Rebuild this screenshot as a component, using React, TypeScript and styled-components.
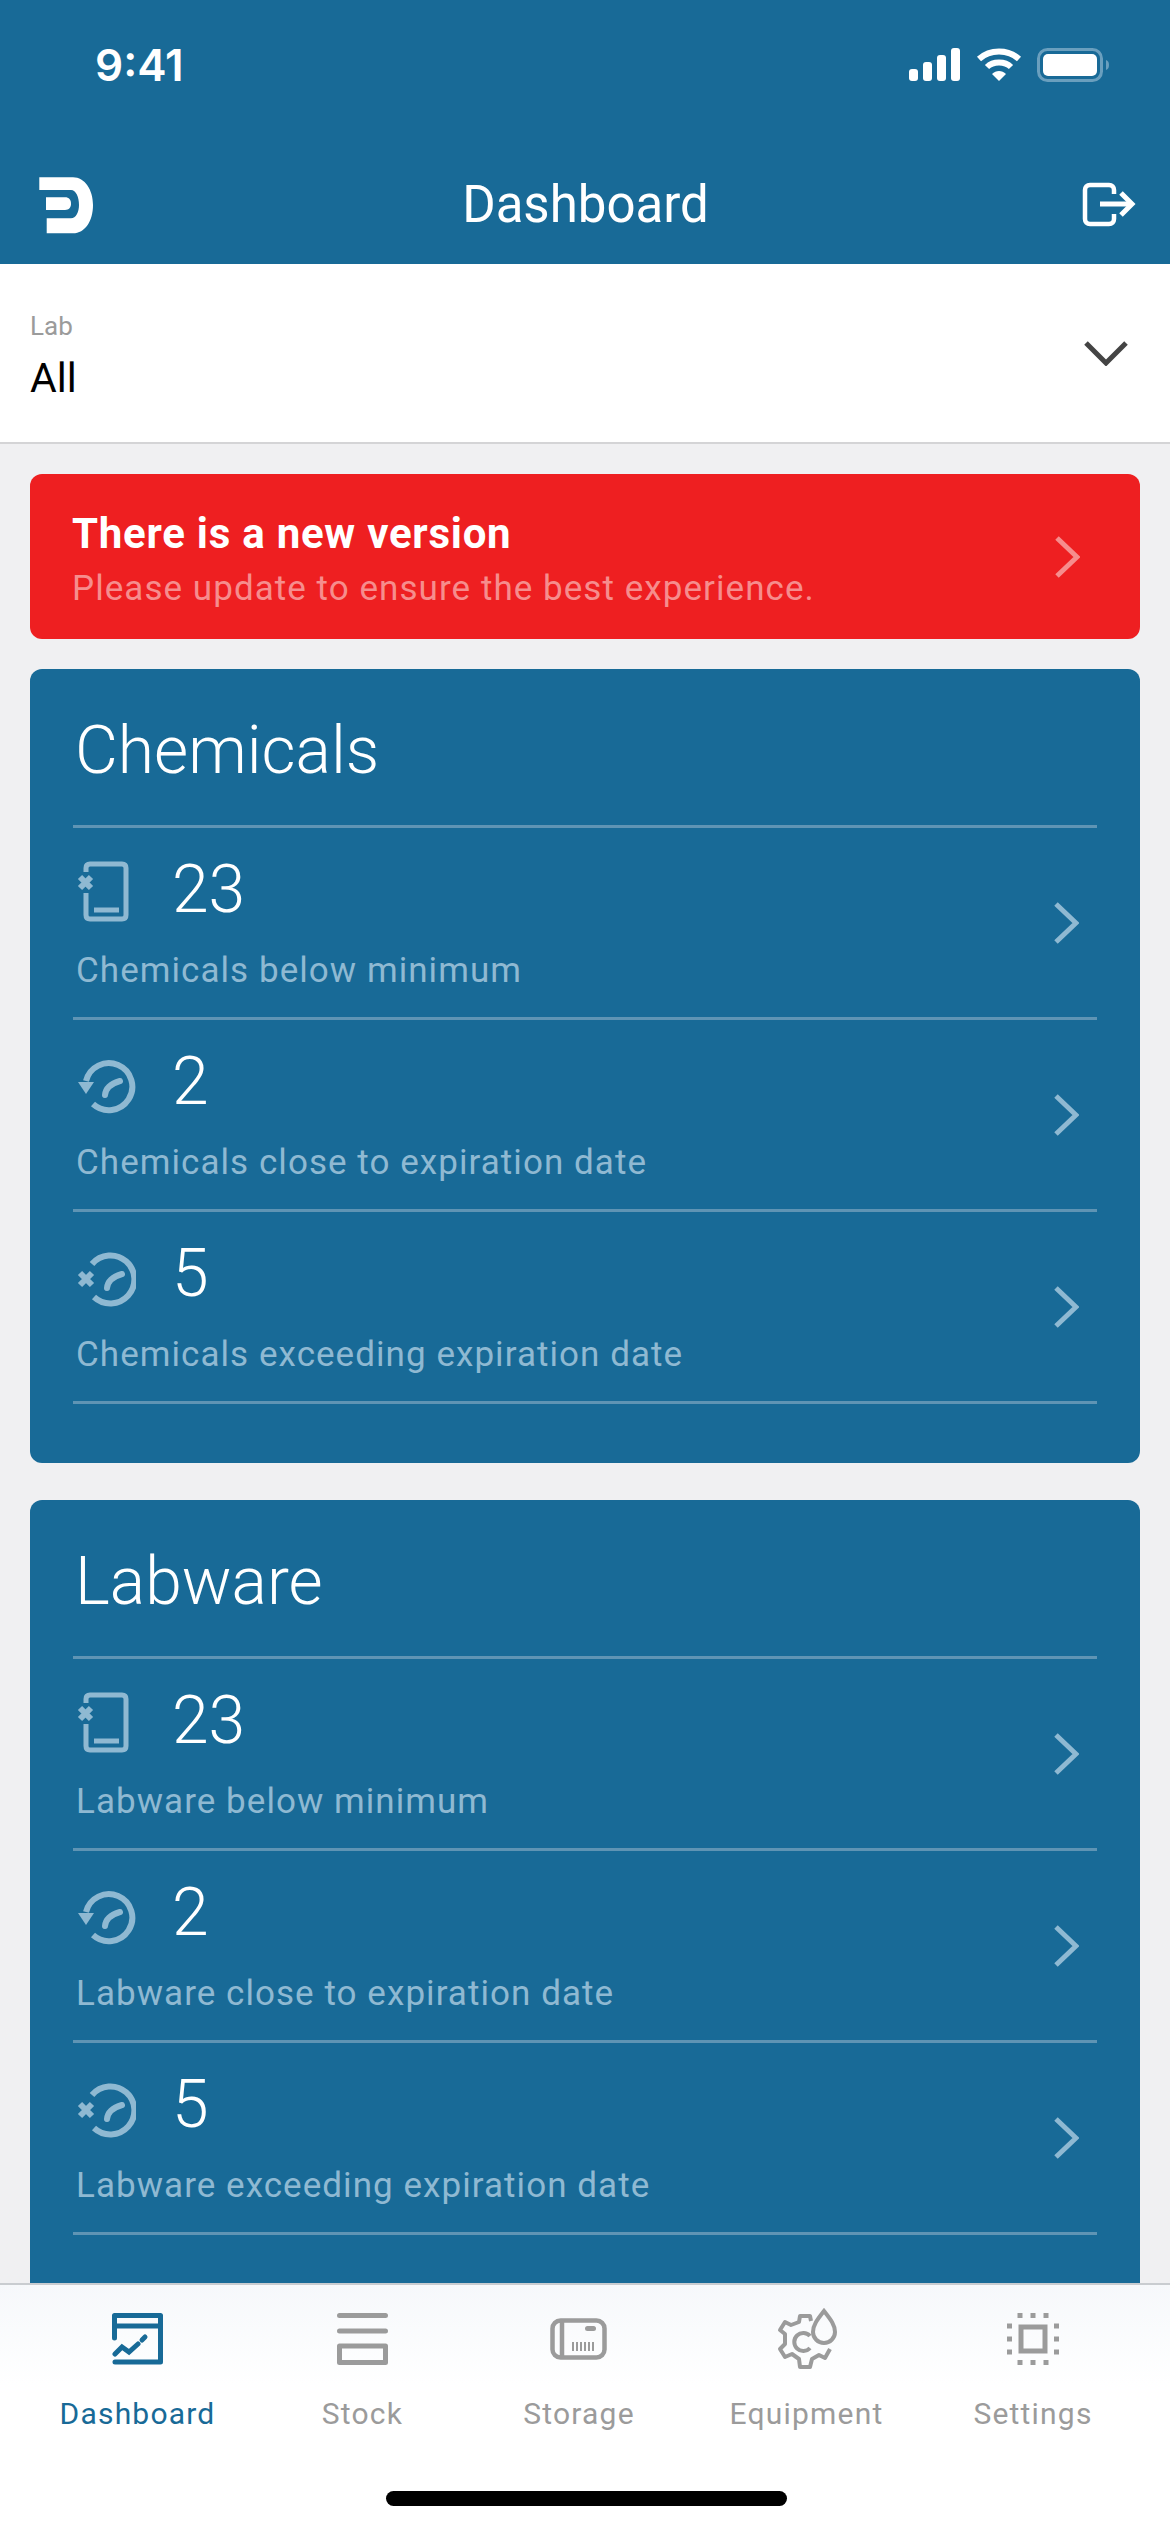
import styled, { createGlobalStyle } from 'styled-components'

const BLUE = '#186a97'
const PALE = '#8fb9d2'
const GREY = '#9b9b9b'

const GlobalStyle = createGlobalStyle`
  html, body {
    margin: 0;
    padding: 0;
    background: #f0f0f2;
  }

  body {
    font-family: Roboto, "Liberation Sans", sans-serif;
  }
`

const Screen = styled.div`
  display: flex;
  flex-direction: column;
  width: 1170px;
  height: 2532px;
  overflow: hidden;
`

const Header = styled.header`
  flex: none;
  background: ${BLUE};
  color: white;
`

const StatusBar = styled.div`
  display: flex;
  justify-content: space-between;
  align-items: center;
  height: 129px;
  padding: 0 59px 0 95px;
`

const Clock = styled.div`
  font-family: Inter, sans-serif;
  font-size: 44px;
  font-weight: 600;
  line-height: 1;
`

const StatusIcons = styled.div`
  display: flex;
  align-items: center;
  gap: 15px;
`

const NavBar = styled.div`
  display: flex;
  justify-content: space-between;
  align-items: center;
  box-sizing: border-box;
  height: 135px;
  padding: 16px 31px 0 36px;
`

const NavTitle = styled.div`
  margin-right: 4px;
  font-size: 51px;
  line-height: 1;
`

const NavIcon = styled.svg`
  display: block;
`

const LabPicker = styled.div`
  flex: none;
  display: flex;
  justify-content: space-between;
  align-items: center;
  box-sizing: border-box;
  height: 180px;
  padding: 0 42px 0 30px;
  background: white;
  border-bottom: 2px solid #d4d4d6;
`

const PickerText = styled.div`
  padding-top: 6px;
`

const PickerLabel = styled.div`
  color: ${GREY};
  font-size: 26px;
  line-height: 30px;
`

const PickerValue = styled.div`
  margin-top: 14px;
  color: black;
  font-size: 41px;
  line-height: 46px;
`

const Content = styled.main`
  flex: 1;
  min-height: 0;
  overflow: hidden;
  display: flex;
  flex-direction: column;
  padding: 30px 30px 0;
`

const Banner = styled.div`
  flex: none;
  display: flex;
  justify-content: space-between;
  align-items: center;
  box-sizing: border-box;
  height: 165px;
  padding: 0 60px 0 42px;
  border-radius: 12px;
  background: #ee1f21;
`

const BannerCopy = styled.div`
  padding-top: 9px;
`

const BannerTitle = styled.div`
  color: white;
  font-size: 42px;
  font-weight: 700;
  letter-spacing: 0.75px;
  line-height: 46px;
`

const BannerText = styled.div`
  margin-top: 10px;
  color: #f68d8d;
  font-size: 35px;
  letter-spacing: 1.05px;
  line-height: 44px;
`

const Card = styled.section`
  flex: none;
  margin-top: 30px;
  padding: 0 43px 59px;
  border-radius: 12px;
  background: ${BLUE};

  & + & {
    margin-top: 37px;
  }
`

const CardTitle = styled.h2`
  box-sizing: border-box;
  height: 159px;
  margin: 0;
  padding-left: 2px;
  border-bottom: 3px solid #5f94b4;
  color: white;
  font-size: 66px;
  font-weight: 300;
  line-height: 164px;
`

const Row = styled.div`
  display: flex;
  justify-content: space-between;
  align-items: center;
  box-sizing: border-box;
  height: 192px;
  padding-right: 18px;
  border-bottom: 3px solid #5f94b4;
`

const RowTop = styled.div`
  display: flex;
  align-items: center;
  height: 74px;
`

const RowIcon = styled.svg<{ $drop: number }>`
  display: block;
  flex: none;
  margin-left: 3px;
  margin-top: ${({ $drop }) => $drop}px;
`

const IconSlot = styled.div`
  flex: none;
  width: 99px;
`

const RowCount = styled.div`
  color: white;
  font-size: 66px;
  font-weight: 300;
  line-height: 74px;
`

const RowLabel = styled.div`
  margin-top: 22px;
  padding-left: 3px;
  color: ${PALE};
  font-size: 35px;
  letter-spacing: 1.05px;
  line-height: 44px;
`

const TabBar = styled.nav`
  flex: none;
  box-sizing: border-box;
  height: 249px;
  padding-top: 23px;
  border-top: 2px solid #c9ccd0;
  background: linear-gradient(#f6f8fb, #ffffff 40%);
`

const TabList = styled.div`
  display: grid;
  grid-template-columns: 225px 225px 208px 247px 206px;
  padding-left: 25px;
`

const Tab = styled.div<{ $active?: boolean }>`
  display: flex;
  flex-direction: column;
  align-items: center;
  color: ${({ $active }) => ($active ? BLUE : GREY)};
`

const TabIconBox = styled.div`
  display: flex;
  justify-content: center;
  align-items: center;
  height: 62px;
`

const TabLabel = styled.div`
  margin-top: 24px;
  font-size: 30px;
  letter-spacing: 1.2px;
  line-height: 40px;
`

const HomeIndicator = styled.div`
  width: 401px;
  height: 15px;
  margin: 57px 0 0 386px;
  border-radius: 8px;
  background: black;
`

const SignalIcon = () => (
  <svg width="52" height="33" viewBox="0 0 52 33" fill="white">
    <rect x="0" y="21" width="9" height="12" rx="3" />
    <rect x="14" y="14" width="9" height="19" rx="3" />
    <rect x="28" y="7" width="9" height="26" rx="3" />
    <rect x="42" y="0" width="9" height="33" rx="3" />
  </svg>
)

const WifiIcon = () => (
  <svg width="46" height="33" viewBox="0 0 46 33" fill="none" stroke="white" strokeWidth="6">
    <path d="M3 11 C14 1 32 1 43 11" />
    <path d="M11 19 C17 13 29 13 35 19" />
    <path d="M16 26 L23 33 L30 26 C26 22 20 22 16 26 Z" fill="white" stroke="none" />
  </svg>
)

const BatteryIcon = () => (
  <svg width="74" height="34" viewBox="0 0 74 34">
    <rect x="1.5" y="1.5" width="63" height="31" rx="9" fill="none" stroke="#6a9fbe" strokeWidth="3" />
    <rect x="6" y="6" width="54" height="22" rx="5" fill="white" />
    <path d="M69 12 C73 13 73 21 69 22 Z" fill="#6a9fbe" />
  </svg>
)

const LogoIcon = () => (
  <NavIcon width="60" height="62" viewBox="0 0 60 62" fill="white">
    <path d="M3.3 3.3 H37 C49 3.3 57 16 57 31 C57 47 49 59.3 37 59.3 H10.7 V44.3 H35 C40 44.3 43 38 43 31 C43 23 40 16 35 16 H3.3 Z" />
    <path d="M10 23.3 H29 C33 23.3 35 26 35 29.6 C35 33.5 33 36 29 36 H10 Z" />
  </NavIcon>
)

const LogoutIcon = () => (
  <NavIcon width="60" height="50" viewBox="0 0 60 50" fill="none" stroke="white" strokeWidth="4.5">
    <path d="M35 14 V10 C35 7 33 5 30 5 H11 C8 5 6 7 6 10 V39 C6 42 8 44 11 44 H30 C33 44 35 42 35 39 V34" />
    <path d="M21 24 H52" strokeWidth="5" />
    <path d="M42 13 L53 24 L42 35" strokeWidth="5" />
  </NavIcon>
)

const PickerChevron = () => (
  <svg width="44" height="26" viewBox="0 0 44 26" fill="none" stroke="#444444" strokeWidth="5">
    <path d="M2 3 L22 23 L42 3" />
  </svg>
)

const RowChevron = ({ color = PALE }: { color?: string }) => (
  <svg width="26" height="42" viewBox="0 0 26 42" fill="none" stroke={color} strokeWidth="5">
    <path d="M3 2 L23 21 L3 40" />
  </svg>
)

const BelowMinimumIcon = () => (
  <RowIcon $drop={4} width="56" height="64" viewBox="0 0 56 64" fill="none" stroke={PALE} strokeWidth="5">
    <path d="M10 12 V8 C10 5.5 11.5 4 14 4 H46 C48.5 4 50 5.5 50 8 V55 C50 57.5 48.5 59 46 59 H14 C11.5 59 10 57.5 10 55 V33" />
    <path d="M18 50 H43" />
    <path d="M4 17 L15 28 M15 17 L4 28" strokeWidth="6" />
  </RowIcon>
)

const CloseToExpiryIcon = () => (
  <RowIcon $drop={10} width="60" height="56" viewBox="0 0 60 56" fill="none" stroke={PALE} strokeWidth="6">
    <path d="M10 22 A23.5 23.5 0 1 1 17 45" />
    <path d="M2 23 H18 L10 35 Z" fill={PALE} stroke="none" />
    <path d="M29 36 Q30 26 44 22" strokeWidth="6" strokeLinecap="round" />
  </RowIcon>
)

const ExceedingExpiryIcon = () => (
  <RowIcon $drop={10} width="60" height="56" viewBox="0 0 60 56" fill="none" stroke={PALE} strokeWidth="6">
    <path d="M16 13 A24 24 0 1 1 18 46" />
    <path d="M4 22 L16 34 M16 22 L4 34" strokeWidth="6" />
    <path d="M31 37 Q32 27 46 23" strokeWidth="6" strokeLinecap="round" />
  </RowIcon>
)

const DashboardTabIcon = () => (
  <svg width="52" height="52" viewBox="0 0 52 52" fill="none" stroke={BLUE} strokeWidth="5" strokeLinecap="round">
    <path d="M2.5 25 V2.5 H48.5 V49 H3" strokeLinejoin="round" />
    <path d="M3 13 H48" strokeLinecap="butt" />
    <path d="M3 41 L10 34 L17 39 L26 31" />
    <path d="M30 27 L33 24" />
  </svg>
)

const StockTabIcon = () => (
  <svg width="52" height="52" viewBox="0 0 52 52" fill="none" stroke={GREY} strokeWidth="5">
    <path d="M2.5 2.5 H48.5 M2.5 18 H48.5" strokeLinecap="round" />
    <rect x="2.5" y="33" width="46" height="16.5" strokeLinejoin="round" />
  </svg>
)

const StorageTabIcon = () => (
  <svg width="58" height="42" viewBox="0 0 58 42" fill="none" stroke={GREY} strokeWidth="4.5">
    <rect x="2.5" y="2.5" width="52" height="37" rx="8" />
    <path d="M12 2 V40" />
    <rect x="35" y="8" width="11" height="5" rx="2.5" fill={GREY} stroke="none" />
    <path d="M23 24 V33 M27 24 V33 M31 24 V33 M35 24 V33 M39 24 V33 M43 24 V33" strokeWidth="2" />
  </svg>
)

const EquipmentTabIcon = () => (
  <svg width="60" height="62" viewBox="0 0 60 62" fill="none" stroke={GREY} strokeWidth="4">
    <path d="M34 13 L33 8 H23 L22 14 L14 17 L8 14 L3 22 L8 26 V36 L3 41 L8 49 L15 46 L22 51 L23 59 H33 L35 51 L42 47 L48 50 L53 41" strokeLinejoin="round" />
    <path d="M33 28 A9 9 0 1 0 33 40" />
    <path d="M47 3 C40 12 36 17 36 24 A11 11 0 0 0 58 24 C58 17 54 12 47 3 Z" />
  </svg>
)

const SettingsTabIcon = () => (
  <svg width="52" height="52" viewBox="0 0 52 52" fill={GREY}>
    <rect x="14" y="14" width="24" height="24" fill="none" stroke={GREY} strokeWidth="5" />
    {[13, 26, 39].map((pos) => (
      <g key={pos}>
        <rect x={pos - 2.5} y="0" width="5" height="5" />
        <rect x={pos - 2.5} y="47" width="5" height="5" />
        <rect x="0" y={pos - 2.5} width="5" height="5" />
        <rect x="47" y={pos - 2.5} width="5" height="5" />
      </g>
    ))}
  </svg>
)

const rows = [
  { icon: <BelowMinimumIcon />, count: 23, text: 'below minimum' },
  { icon: <CloseToExpiryIcon />, count: 2, text: 'close to expiration date' },
  { icon: <ExceedingExpiryIcon />, count: 5, text: 'exceeding expiration date' },
]

const tabs = [
  { label: 'Dashboard', icon: <DashboardTabIcon />, active: true },
  { label: 'Stock', icon: <StockTabIcon /> },
  { label: 'Storage', icon: <StorageTabIcon /> },
  { label: 'Equipment', icon: <EquipmentTabIcon /> },
  { label: 'Settings', icon: <SettingsTabIcon /> },
]

const StockCard = ({ title }: { title: string }) => (
  <Card>
    <CardTitle>{title}</CardTitle>
    {rows.map((row) => (
      <Row key={row.text}>
        <div>
          <RowTop>
            <IconSlot>{row.icon}</IconSlot>
            <RowCount>{row.count}</RowCount>
          </RowTop>
          <RowLabel>
            {title} {row.text}
          </RowLabel>
        </div>
        <RowChevron />
      </Row>
    ))}
  </Card>
)

const App = () => {
  return (
    <Screen>
      <GlobalStyle />
      <Header>
        <StatusBar>
          <Clock>9:41</Clock>
          <StatusIcons>
            <SignalIcon />
            <WifiIcon />
            <BatteryIcon />
          </StatusIcons>
        </StatusBar>
        <NavBar>
          <LogoIcon />
          <NavTitle>Dashboard</NavTitle>
          <LogoutIcon />
        </NavBar>
      </Header>
      <LabPicker>
        <PickerText>
          <PickerLabel>Lab</PickerLabel>
          <PickerValue>All</PickerValue>
        </PickerText>
        <PickerChevron />
      </LabPicker>
      <Content>
        <Banner>
          <BannerCopy>
            <BannerTitle>There is a new version</BannerTitle>
            <BannerText>Please update to ensure the best experience.</BannerText>
          </BannerCopy>
          <RowChevron color="#f68d8d" />
        </Banner>
        <StockCard title="Chemicals" />
        <StockCard title="Labware" />
      </Content>
      <TabBar>
        <TabList>
          {tabs.map((tab) => (
            <Tab key={tab.label} $active={tab.active}>
              <TabIconBox>{tab.icon}</TabIconBox>
              <TabLabel>{tab.label}</TabLabel>
            </Tab>
          ))}
        </TabList>
        <HomeIndicator />
      </TabBar>
    </Screen>
  )
}

export default App
